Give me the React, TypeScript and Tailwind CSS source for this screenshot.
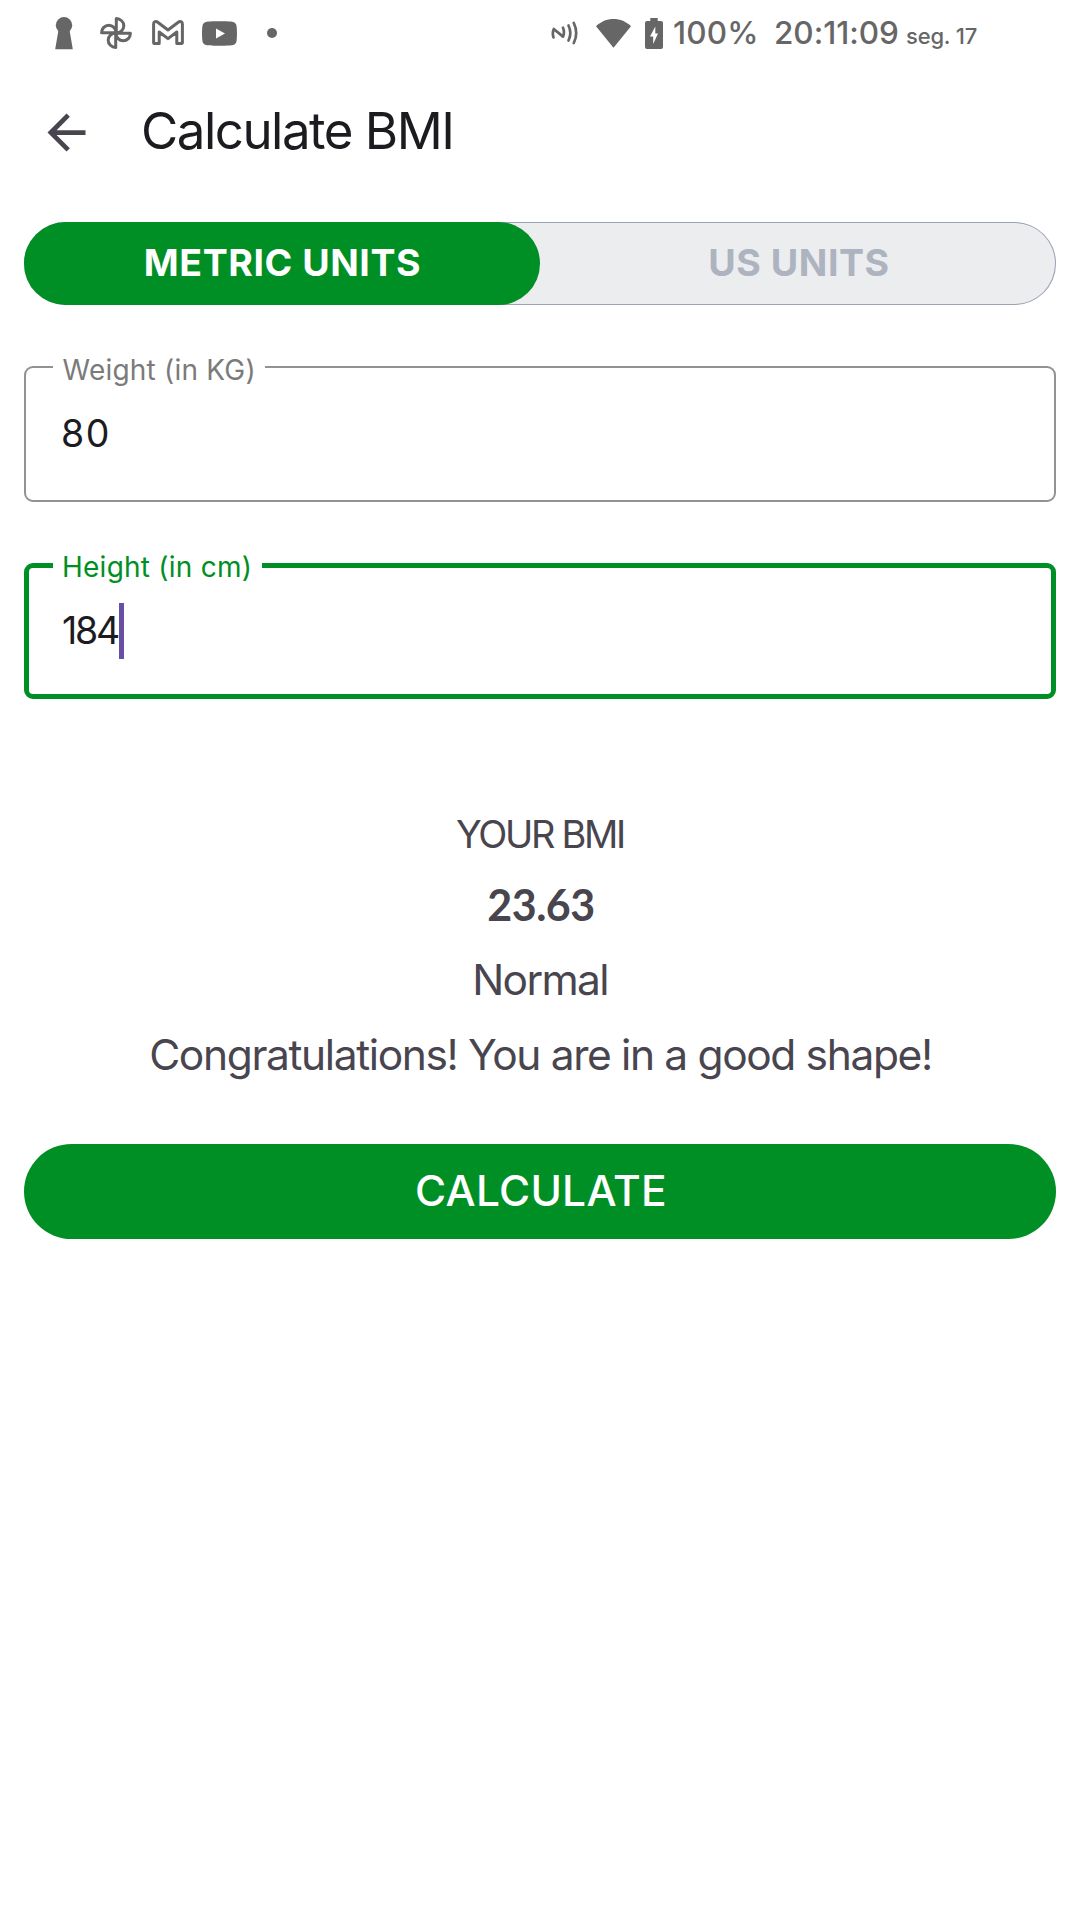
import React from "react";

function KeyholeIcon() {
  return (
    <svg className="h-[33px] w-[18px]" viewBox="0 0 18 33" fill="currentColor">
      <circle cx="9" cy="8.2" r="8.2" />
      <path d="M3.500 13h11L17.800 32.300H.2z" />
    </svg>
  );
}

function PhotosIcon() {
  return (
    <svg className="h-8 w-8" viewBox="0 0 32 32" fill="none" stroke="currentColor" strokeWidth="3" strokeLinejoin="round">
      <path d="M16.300 1.600a7.500 7.200 0 0 1 0 14.400z" />
      <path d="M30.400 16.300a7.200 7.500 0 0 1-14.400 0z" />
      <path d="M15.700 30.400a7.500 7.200 0 0 1 0-14.400z" />
      <path d="M1.600 15.700a7.200 7.500 0 0 1 14.400 0z" />
    </svg>
  );
}

function MailIcon() {
  return (
    <svg className="h-[26px] w-8" viewBox="0 0 32 26" fill="none" stroke="currentColor" strokeWidth="3" strokeLinejoin="round">
      <path d="M1.600 3.900C1.600 1.600 4 .9 5.700 2.200L16 10l10.300-7.800c1.700-1.300 4.100-.6 4.100 1.700v18.900a.7.7 0 0 1-.7.7h-4.900V12L16 18.600 7.200 12v11.500H2.300a.7.7 0 0 1-.7-.7z" />
    </svg>
  );
}

function VideoIcon() {
  return (
    <svg className="h-[25px] w-[35px]" viewBox="0 0 35 25" fill="currentColor">
      <path fillRule="evenodd" d="M5 .7C9 .1 26 .1 30 .7c3 .4 4.300 2 4.600 4.600.5 4 .5 10.400 0 14.400-.3 2.600-1.600 4.200-4.600 4.600-4 .6-21 .6-25 0C2 23.900.7 22.300.4 19.700c-.5-4-.5-10.400 0-14.400C.7 2.700 2 1.100 5 .7zM14 7.400v10.200l9-5.100z" />
    </svg>
  );
}

function NfcIcon() {
  return (
    <svg className="h-[24px] w-[28px]" viewBox="0 0 28 24" fill="none" stroke="currentColor" strokeWidth="2.7" strokeLinecap="round">
      <path d="M2.500 16.400C1.500 13.500 1.700 10.500 2.800 8L12 15.600C13.200 12.800 13.200 9.500 12 6.700" strokeLinejoin="round" />
      <path d="M17.500 4.500a17 17 0 0 1 0 15" />
      <path d="M22.800 2a23 23 0 0 1 0 20" />
    </svg>
  );
}

function WifiIcon() {
  return (
    <svg className="h-[29px] w-[35px]" viewBox="0 0 35 29" fill="currentColor">
      <path d="M17.500 28.700L0 7.200C4.800 2.600 10.900 0 17.500 0S30.200 2.600 35 7.200z" />
    </svg>
  );
}

function BatteryIcon() {
  return (
    <svg className="h-[31px] w-[18px]" viewBox="0 0 18 31" fill="currentColor">
      <path fillRule="evenodd" d="M5.300 0h7.400v3H16a2 2 0 0 1 2 2v24a2 2 0 0 1-2 2H2a2 2 0 0 1-2-2V5a2 2 0 0 1 2-2h3.300zM10.300 8.500L5 18.600h3.200V26L13 15.500H10.300z" />
    </svg>
  );
}

function BackIcon() {
  return (
    <svg className="h-[57px] w-[57px]" viewBox="0 0 24 24" fill="currentColor">
      <path d="M20 11H7.830l5.590-5.590L12 4l-8 8 8 8 1.410-1.410L7.830 13H20z" />
    </svg>
  );
}

function StatusBar() {
  return (
    <header className="flex h-[66px] items-center pl-[55px] text-[#666666]">
      <KeyholeIcon />
      <div className="ml-[27px]"><PhotosIcon /></div>
      <div className="ml-5"><MailIcon /></div>
      <div className="ml-[18px]"><VideoIcon /></div>
      <div className="ml-[30px] h-[10px] w-[10px] rounded-full bg-[#666666]" />
      <div className="ml-[274px]"><NfcIcon /></div>
      <div className="ml-[17px]"><WifiIcon /></div>
      <div className="ml-[14px]"><BatteryIcon /></div>
      <div className="flex items-baseline whitespace-nowrap font-medium">
        <span className="ml-[10px] w-[101px] text-[31.5px] tracking-[0.2px]">100%</span>
        <span className="w-[132px] text-[31.5px] tracking-[-0.05px]">20:11:09</span>
        <span className="text-[22px] tracking-[-0.18px]">seg. 17</span>
      </div>
    </header>
  );
}

type FieldProps = { label: string; value: string; active?: boolean };

function Field({ label, value, active = false }: FieldProps) {
  return (
    <div
      className={
        active
          ? "relative flex h-[136px] items-start rounded-[9px] border-[5px] border-[#008f24] pl-[33px] pt-[33px]"
          : "relative flex h-[136px] items-start rounded-[9px] border-2 border-[#929292] pl-[35px] pt-[36px]"
      }
    >
      <span
        className={
          active
            ? "absolute left-6 top-[-21px] h-10 w-[209px] whitespace-nowrap bg-white pl-[9px] text-[28px] leading-10 tracking-[0.24px] text-[#008f24]"
            : "absolute left-[27px] top-[-18px] h-10 w-[212px] whitespace-nowrap bg-white pl-[9.5px] text-[28px] leading-10 tracking-[0.21px] text-[#7b7b7b]"
        }
      >
        {label}
      </span>
      <span
        className={
          active
            ? "w-[57px] whitespace-nowrap text-[37.5px] leading-[60px] tracking-[-2.2px] text-[#1c1b1f]"
            : "whitespace-nowrap text-[37.5px] leading-[60px] tracking-[1.500px] text-[#1c1b1f]"
        }
      >
        {value}
      </span>
      {active && <span className="mt-[2px] h-[56px] w-[5px] bg-[#6750a4]" />}
    </div>
  );
}

export default function App() {
  return (
    <div className="min-h-[1920px] w-[1080px] bg-white font-['Inter',sans-serif]">
      <StatusBar />
      <div className="flex h-[129px] items-center pl-[38px]">
        <button className="mt-[3px] text-[#49454f]"><BackIcon /></button>
        <h1 className="ml-[46px] mt-[2px] text-[51px] tracking-[-1.5px] text-[#1c1b1f]">Calculate BMI</h1>
      </div>
      <main className="flex flex-col px-6 pt-[27px]">
        <div className="flex h-[83px] rounded-full bg-[#ebedef] text-[37.5px] font-bold leading-[80px] tracking-[0.55px] shadow-[inset_0_0_0_1px_#9aa3b2]">
          <button className="w-1/2 rounded-full bg-[#008f24] pb-[2px] pl-[1px] text-white">METRIC UNITS</button>
          <button className="w-1/2 pb-[2px] pl-[2px] text-[#adb3bf]">US UNITS</button>
        </div>
        <div className="mt-[61px]"><Field label="Weight (in KG)" value="80" /></div>
        <div className="mt-[61px]"><Field label="Height (in cm)" value="184" active /></div>
        <section className="mt-[100px] flex flex-col items-center whitespace-nowrap text-[42.5px] text-[#49454f]">
          <p className="text-[38px] leading-[71px] tracking-[-2.31px]">YOUR BMI</p>
          <p className="pl-[2px] font-['Lato',sans-serif] text-[43px] font-bold leading-[70px] tracking-[-0.51px]">23.63</p>
          <p className="leading-[80px] tracking-[-1.65px]">Normal</p>
          <p className="pl-[1px] leading-[70px] tracking-[-1.37px]">Congratulations! You are in a good shape!</p>
        </section>
        <button className="mt-[54px] h-[95px] rounded-full bg-[#008f24] pb-[2px] pl-[2px] text-[42.5px] font-medium leading-[92px] tracking-[0.25px] text-white">
          CALCULATE
        </button>
      </main>
    </div>
  );
}
